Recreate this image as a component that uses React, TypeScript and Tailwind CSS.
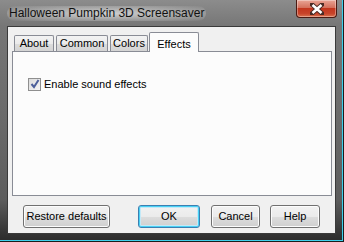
const ui = { fontFamily: '"Liberation Sans", Arial, sans-serif' }

function Tab({ label, width, active, ml }: { label: string; width: string; active?: boolean; ml: string }) {
  if (active) {
    return (
      <div
        className={`${width} ${ml} relative z-10 -mb-px flex h-[20px] items-start justify-center rounded-t-[2px] border border-b-0 border-[#898c95] bg-[#fcfcfc] pt-[3px] text-[11px] text-black`}
      >
        {label}
      </div>
    )
  }
  return (
    <div
      className={`${width} ${ml} flex h-[16px] items-center justify-center rounded-t-[2px] border border-b-0 border-[#898c95] bg-[linear-gradient(#f3f3f3,#ebebeb_50%,#dcdcdc_51%,#d4d4d4)] text-[11px] text-black`}
    >
      {label}
    </div>
  )
}

function Button({ label, width, ml, focused }: { label: string; width: string; ml: string; focused?: boolean }) {
  return (
    <div
      className={`${width} ${ml} flex h-[23px] items-center justify-center rounded-[3px] border bg-[linear-gradient(#f2f2f2,#ebebeb_50%,#dddddd_51%,#cfcfcf)] text-[11px] text-black ${
        focused
          ? 'border-[#3c7fb1] shadow-[inset_0_0_0_1px_#48d1f5,inset_0_0_0_2px_#c4e9f7]'
          : 'border-[#707070] shadow-[inset_0_0_0_1px_#fcfcfc]'
      }`}
    >
      {label}
    </div>
  )
}

function CloseButton() {
  return (
    <div className="mr-[7px] flex h-[18px] w-[41px] items-center justify-center rounded-b-[4px] border border-t-0 border-[#4b1a12] bg-[linear-gradient(#e9a596,#d4705c_45%,#c3361e_50%,#c8442a_80%,#d9734f)] shadow-[inset_0_0_0_1px_rgba(255,255,255,0.35)]">
      <svg width="14" height="12" viewBox="0 0 14 12">
        <path d="M2 1.5 L12 10.5 M12 1.5 L2 10.5" stroke="#4a2a24" strokeWidth="4.5" strokeLinecap="square" />
        <path d="M2.5 2 L11.5 10 M11.5 2 L2.5 10" stroke="#ffffff" strokeWidth="2.6" />
      </svg>
    </div>
  )
}

export default function App() {
  return (
    <div
      style={ui}
      className="flex h-[242px] w-[344px] flex-col overflow-hidden bg-[linear-gradient(#8c8c8c,#767676_26px,#6a6a6a_120px,#5c5c5c_200px,#333333_234px,#2a2a2a)] shadow-[inset_-1px_-1px_0_#1c1c1c,inset_-2px_-2px_0_#3fd0ec]"
    >
      <div className="flex h-[26px] items-start justify-between">
        <span className="ml-[7px] mt-[6px] rounded-full bg-[radial-gradient(ellipse_at_center,rgba(235,235,235,0.75),rgba(200,200,200,0.35)_70%,rgba(150,150,150,0))] px-[2px] text-[12px] leading-[15px] text-[#111]">
          Halloween Pumpkin 3D Screensaver
        </span>
        <CloseButton />
      </div>

      <div className="ml-[7px] h-[208px] w-[329px] border border-[#3a3a3a] bg-[#f0f0f0] px-[4px] pt-[4px]">
        <div className="flex h-[20px] items-end">
          <Tab label="About" width="w-[40px]" ml="ml-[2px]" />
          <Tab label="Common" width="w-[52px]" ml="ml-[2px]" />
          <Tab label="Colors" width="w-[38px]" ml="ml-[2px]" />
          <Tab label="Effects" width="w-[50px]" ml="ml-[1px]" active />
        </div>
        <div className="h-[145px] w-[320px] border border-[#898c95] bg-[#fcfcfc] pl-[15px] pt-[24px]">
          <div className="flex items-center gap-[3px] text-[11px] text-black">
            <div className="flex h-[13px] w-[13px] items-center justify-center border border-[#8f8f8f] bg-[linear-gradient(135deg,#dcdcdc,#f4f4f4)]">
              <svg width="10" height="10" viewBox="0 0 10 10">
                <path d="M1.5 5 L4 8 L8.5 1" stroke="#4c5f9a" strokeWidth="2" fill="none" />
              </svg>
            </div>
            <span>Enable sound effects</span>
          </div>
        </div>
        <div className="mt-[9px] flex">
          <Button label="Restore defaults" width="w-[87px]" ml="ml-[11px]" />
          <Button label="OK" width="w-[62px]" ml="ml-[28px]" focused />
          <Button label="Cancel" width="w-[49px]" ml="ml-[11px]" />
          <Button label="Help" width="w-[50px]" ml="ml-[10px]" />
        </div>
      </div>
    </div>
  )
}
